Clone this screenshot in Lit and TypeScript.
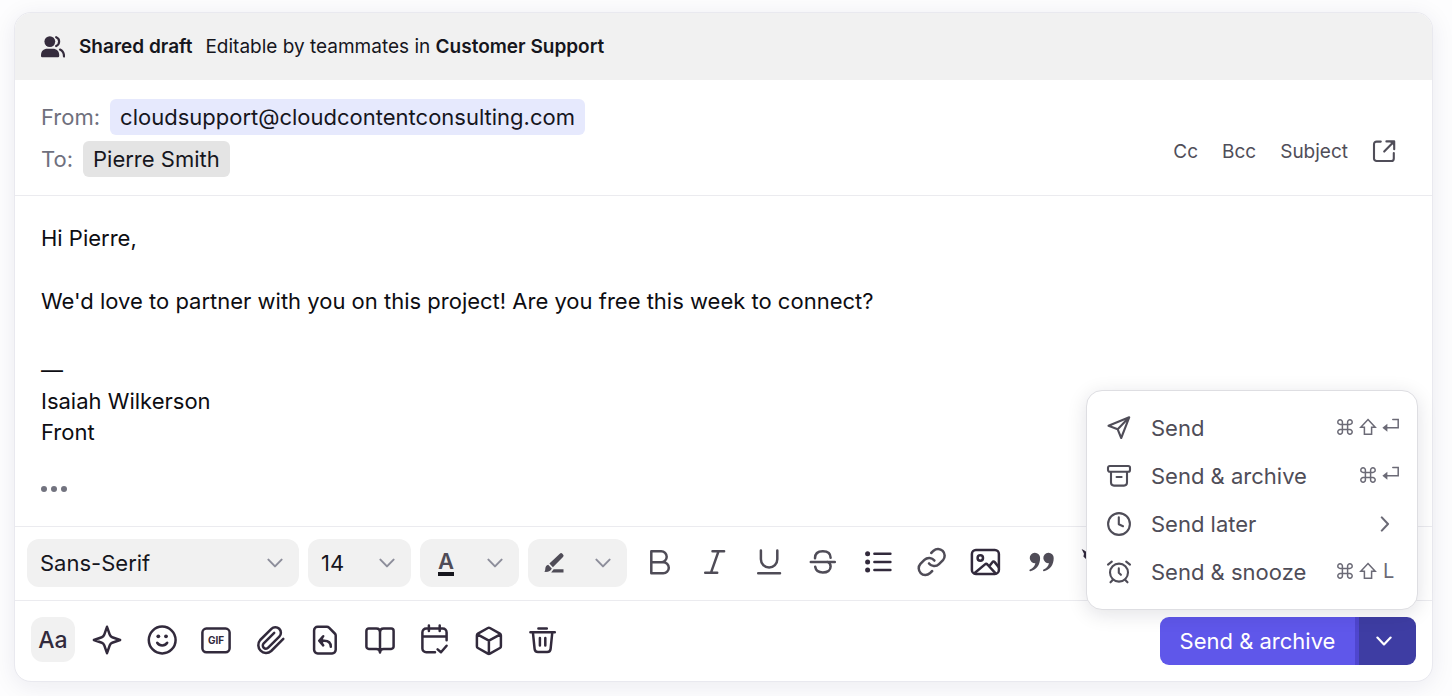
import { LitElement, html, css, svg, nothing, type TemplateResult, type SVGTemplateResult } from "lit";
import { customElement, property } from "lit/decorators.js";

const glyphs: Record<string, { box: number; art: SVGTemplateResult }> = {
  people: {
    box: 24,
    art: svg`<g class="solid"><circle cx="8.8" cy="6.6" r="5.4"/><path d="M0 20.2c0-4 2.600-6.400 6.400-6.400h5.400c3.800 0 6.400 2.400 6.400 6.400v.9a1.200 1.200 0 0 1-1.200 1.200H1.200A1.200 1.200 0 0 1 0 21.100z"/></g>
      <path d="M15.200 2.200c3.900 1.600 3.900 7.200 0 8.800M19 14.600c2.600 1.200 4 3.400 4 6.800"/>`,
  },
  popout: {
    box: 24,
    art: svg`<path d="M8.800 1.600H4.600a2.600 2.600 0 0 0-2.600 2.600v14.200A2.600 2.600 0 0 0 4.600 21h14.600a2.600 2.600 0 0 0 2.600-2.600V13M14.400 1.400h7.800v7.800M22 1.600 12.200 11.600"/><path class="solid" d="M17.500 1.400h4.700v4.700z"/>`,
  },
  chevron: { box: 16, art: svg`<path d="m1.400 4.600 6.600 6.800 6.600-6.800"/>` },
  next: { box: 16, art: svg`<path d="m4.800 1.400 6.200 6.600-6.200 6.600"/>` },
  marker: {
    box: 24,
    art: svg`<g class="solid"><path d="M7.400 12.600 17.800 2.800a1.800 1.800 0 0 1 2.600 0l.6.6a1.800 1.800 0 0 1 0 2.600L10.900 16.200z"/><path d="M6.200 13.800l3.600 3.600c-1 2.600-3.400 3.800-7.600 3.400.9-.8 1-1.800 1.100-3.100.1-2 1.200-3.500 2.900-3.900z"/><path d="M11.600 18.200h9.900v3.200H9.200z"/></g>`,
  },
  bold: {
    box: 32,
    art: svg`<path d="M8.300 4.200v22h12a5.500 5.500 0 0 0 0-11H8.300M18.200 15.200a5.500 5.500 0 0 0 0-11H8.300"/>`,
  },
  italic: { box: 32, art: svg`<path d="M15.500 4.300h11.600M8.200 25.700h12M21.500 4.300 14 25.700"/>` },
  underline: {
    box: 32,
    art: svg`<path d="M8.900 3.400v8.900a8.200 8.200 0 0 0 16.400 0V3.400M6.200 26.300h21.800"/>`,
  },
  strike: {
    box: 32,
    art: svg`<path d="M4.800 14.900h24M9 11.200c0-4.600 3-7 7.800-7s7.800 2.400 7.800 6.600M9.200 19.800c.6 3.600 3.300 5.700 7.600 5.700 4.800 0 7.800-2.300 7.800-5.900 0-2.400-1.200-4-3.200-4.700"/>`,
  },
  list: {
    box: 32,
    art: svg`<path d="M13.400 6.700h16M13.400 15h16M13.400 23h16"/><g class="solid"><circle cx="6.600" cy="6.700" r="2.500"/><circle cx="6.600" cy="15" r="2.500"/><circle cx="6.600" cy="23" r="2.500"/></g>`,
  },
  link: {
    box: 32,
    art: svg`<path d="M14 16.400a6.660 6.660 0 0 0 10 .7l4-4a6.660 6.660 0 0 0-9.400-9.400l-2.400 2.300M19.400 13.600a6.660 6.660 0 0 0-10-.7l-4 4a6.660 6.660 0 0 0 9.400 9.400l2.400-2.300"/>`,
  },
  image: {
    box: 32,
    art: svg`<rect x="2.900" y="2.900" width="27" height="24" rx="4"/><circle cx="11.300" cy="11" r="2.700"/><path d="M5.400 26.300 16 17.400a1.800 1.800 0 0 1 2.400.1l8.200 8.900M20.600 18.800l2.800-3.600a1.500 1.500 0 0 1 2.300-.1l4 5"/>`,
  },
  quote: {
    box: 32,
    art: svg`<g class="solid"><path d="M10.700 5.700a5.200 5.200 0 0 1 5.400 5.400c0 7-3.700 12-9.700 13.200-1 .2-1.400-1.300-.5-1.700 2.900-1.200 4.900-3.200 5.500-6.300a5.200 5.200 0 1 1-.7-10.600z"/><path d="M24.300 5.700a5.200 5.200 0 0 1 5.400 5.400c0 7-3.700 12-9.700 13.200-1 .2-1.400-1.300-.5-1.700 2.900-1.200 4.900-3.200 5.500-6.300a5.200 5.200 0 1 1-.7-10.600z"/></g>`,
  },
  clear: {
    box: 32,
    art: svg`<path class="solid" d="M3.600 2 6 3.200 10 6v8L5.400 9.600 6 6.800z"/>`,
  },
  sparkle: {
    box: 32,
    art: svg`<path d="m16 2.800 2.800 8c.5 1.300 1.200 2 2.400 2.400l7.900 2.800-7.900 2.800c-1.200.4-1.900 1.100-2.400 2.400l-2.800 8-2.800-8c-.5-1.300-1.200-2-2.400-2.400L2.900 16l7.900-2.800c1.200-.4 1.900-1.100 2.400-2.400z"/>`,
  },
  smile: {
    box: 32,
    art: svg`<circle cx="16.200" cy="16" r="13.400"/><path d="M11.200 18.800c2.400 3.600 7.600 3.600 10 0"/><g class="solid"><circle cx="12.300" cy="12.300" r="1.900"/><circle cx="20" cy="12.300" r="1.900"/></g>`,
  },
  gif: {
    box: 32,
    art: svg`<rect x="2.400" y="4.600" width="27.200" height="23.600" rx="4"/><text x="16" y="20.300">GIF</text>`,
  },
  clip: {
    box: 32,
    art: svg`<path d="M28.300 14.800 16.200 27a7.800 7.800 0 0 1-11-11L16.400 4.800a5.500 5.500 0 0 1 7.900 7.800L13.200 23.700a3.100 3.100 0 0 1-4.500-4.400L19.200 8.900"/>`,
  },
  template: {
    box: 32,
    art: svg`<path d="M8.700 2.800h9.200a3 3 0 0 1 2.100.9l5.800 5.800a3 3 0 0 1 .9 2.100v14.200a3.600 3.600 0 0 1-3.600 3.600H8.700a3.600 3.600 0 0 1-3.600-3.600V6.400a3.600 3.600 0 0 1 3.600-3.600z"/><path d="m14.200 12.200-4 4.600 4 4.600M10.600 16.800h4.600c4 0 6.600 2.200 6.600 6"/><path class="solid" d="M14.200 12.200v9.200l-4-4.600z"/>`,
  },
  book: {
    box: 32,
    art: svg`<path d="M16 8c0-2.200-1.300-3.500-3.600-3.500H4.800a2.400 2.400 0 0 0-2.400 2.400v15.600a2.400 2.400 0 0 0 2.400 2.400h7.600c2.200 0 3.600 1.300 3.600 3.500 0-2.200 1.400-3.500 3.600-3.500h7.600a2.400 2.400 0 0 0 2.400-2.400V6.900a2.400 2.400 0 0 0-2.400-2.400h-7.600C17.300 4.500 16 5.800 16 8zv20"/>`,
  },
  calendar: {
    box: 32,
    art: svg`<path d="M17 28.300H8.200a3.800 3.800 0 0 1-3.800-3.800V8.400a3.800 3.800 0 0 1 3.800-3.800h16.600a3.800 3.800 0 0 1 3.800 3.800v7.800M4.400 12.500h24.200M10.900 1.600v5.400M21.700 1.600v5.400M19.600 25.400l3.400 2.900 5.600-6.500"/>`,
  },
  cube: {
    box: 32,
    art: svg`<path d="M14.900 4a2 2 0 0 1 2 0l10 5.600a2 2 0 0 1 1 1.800v10.800a2 2 0 0 1-1 1.800l-10 5.600a2 2 0 0 1-2 0L4.900 24a2 2 0 0 1-1-1.800V11.400a2 2 0 0 1 1-1.800zM4.400 10.400l11.500 6.200 11.500-6.200M15.900 16.600v12.800"/>`,
  },
  trash: {
    box: 32,
    art: svg`<path d="M3.400 8.300h24.400M11.400 4.400h8.400M5.900 8.300l1.700 16.600a3.400 3.400 0 0 0 3.400 3.100h9.200a3.400 3.400 0 0 0 3.400-3.100l1.700-16.600M12.900 14v7.400M18.300 14v7.400"/>`,
  },
  plane: {
    box: 28,
    art: svg`<path d="M3.500 11.800 24.200 3.300 16.200 24 12.700 15.300zM12.700 15.300 24.200 3.300"/>`,
  },
  archive: {
    box: 28,
    art: svg`<rect x="3" y="4" width="22" height="5.800" rx="1.800"/><path d="M6 10v10.600a3 3 0 0 0 3 3h10a3 3 0 0 0 3-3V10M11.600 15h5"/>`,
  },
  clock: { box: 28, art: svg`<circle cx="14" cy="14" r="10.900"/><path d="M13.800 7.200v7.100l4.200 1.900"/>` },
  alarm: {
    box: 28,
    art: svg`<circle cx="14" cy="14.600" r="9"/><path d="M13.800 10.400v4.400l2.100 2M3 6.600l3.800-3M25 6.600l-3.800-3M8 21.700l-2.500 2.600M20 21.700l2.500 2.600"/>`,
  },
  command: {
    box: 18,
    art: svg`<path d="M6.400 6.400h5.200v5.200H6.400zM6.400 6.400H4.200a2.300 2.300 0 1 1 2.200-2.300zM11.600 6.400V4.100a2.300 2.300 0 1 1 2.200 2.300zM11.600 11.600h2.200a2.300 2.300 0 1 1-2.200 2.300zM6.400 11.600v2.300a2.300 2.300 0 1 1-2.200-2.300z"/>`,
  },
  shift: { box: 18, art: svg`<path d="m9 1.500 7.200 7.700h-3.600v7H5.400v-7H1.800z"/>` },
  enter: {
    box: 18,
    art: svg`<path d="M10.800 1.500h5.400v8.300H5"/><path class="solid" d="M.4 9.800l5-4v8z"/>`,
  },
};

const icon = (name: string, extra = ""): TemplateResult => {
  const g = glyphs[name];
  return html`<svg class="icon ${extra}" width=${g.box} height=${g.box} viewBox="0 0 ${g.box} ${g.box}" aria-hidden="true">${g.art}</svg>`;
};

const shared = css`
  :host {
    font-family: Inter, "Liberation Sans", sans-serif;
    color: #16161d;
  }
  * {
    box-sizing: border-box;
  }
  button,
  select {
    font: inherit;
    color: inherit;
    border: 0;
    margin: 0;
    padding: 0;
    background: none;
    cursor: pointer;
  }
  .icon {
    display: block;
    flex: none;
    fill: none;
    stroke: currentColor;
    stroke-width: 2.5;
    stroke-linecap: round;
    stroke-linejoin: round;
  }
  .icon .solid {
    fill: currentColor;
    stroke: none;
  }
  .icon text {
    fill: currentColor;
    stroke: none;
    font-size: 10px;
    font-weight: 700;
    text-anchor: middle;
  }
`;

interface MenuEntry {
  label: string;
  icon: string;
  keys: string[];
  submenu?: boolean;
}

@customElement("send-menu")
export class SendMenu extends LitElement {
  @property({ attribute: false }) entries: MenuEntry[] = [];

  static styles = [
    shared,
    css`
      :host {
        display: block;
        width: 332px;
        padding: 13px 0;
        border: 1px solid #dedee2;
        border-radius: 16px;
        background: #fff;
        box-shadow: 0 4px 20px rgba(20, 20, 40, 0.12);
      }
      .entry {
        display: flex;
        align-items: center;
        width: 100%;
        height: 48px;
        padding: 0 17px 0 18px;
        font-size: 22px;
        color: #4f4d58;
        text-align: left;
      }
      .icon {
        stroke-width: 2.1;
      }
      .label {
        flex: 1;
        padding-left: 18px;
        white-space: nowrap;
      }
      .keys {
        display: flex;
        align-items: center;
        gap: 5px;
        padding-bottom: 2px;
        color: #6b6a76;
      }
      .key {
        stroke-width: 1.5;
        stroke-linejoin: miter;
      }
      .letter {
        width: 18px;
        padding-left: 1px;
        font-size: 20px;
        line-height: 18px;
      }
      .more {
        margin-right: 7px;
        color: #6b6a76;
      }
    `,
  ];

  render() {
    return this.entries.map(
      (e) => html`<button class="entry" role="menuitem">
        ${icon(e.icon)}
        <span class="label">${e.label}</span>
        ${e.submenu ? icon("next", "more") : nothing}
        ${e.keys.length
          ? html`<span class="keys">
              ${e.keys.map((k) => (k in glyphs ? icon(k, "key") : html`<span class="letter">${k}</span>`))}
            </span>`
          : nothing}
      </button>`,
    );
  }
}

@customElement("app-root")
export class AppRoot extends LitElement {
  static styles = [
    shared,
    css`
      :host {
        display: flex;
        min-height: 100vh;
        padding: 12px 19px 14px 14px;
        box-sizing: border-box;
        background: #fdfdfe;
        font-size: 22px;
      }
      .composer {
        flex: 1;
        min-width: 0;
        display: flex;
        flex-direction: column;
        border: 1px solid #e9e9ef;
        border-radius: 17px;
        background: #fff;
        box-shadow: 0 4px 24px rgba(30, 30, 80, 0.08);
      }
      .banner {
        display: flex;
        align-items: center;
        height: 67px;
        padding: 0 26px;
        border-radius: 16px 16px 0 0;
        background: #f1f1f1;
        font-size: 19px;
        white-space: nowrap;
      }
      .banner .icon {
        margin-right: 14px;
        color: #352c3d;
        stroke-width: 2.2;
      }
      .banner strong {
        font-weight: 600;
      }
      .banner .title {
        margin-right: 13px;
      }
      .fields {
        display: flex;
        align-items: center;
        justify-content: space-between;
        padding: 19px 36px 18px 26px;
        border-bottom: 1px solid #ebebef;
      }
      .rows {
        display: grid;
        gap: 6px;
      }
      .row {
        display: flex;
        align-items: center;
        gap: 10px;
        height: 36px;
        color: #6f707d;
      }
      .chip {
        height: 36px;
        padding: 0 10px;
        border-radius: 6px;
        background: #e4e4e4;
        color: #16161d;
      }
      .chip.sender {
        background: #e6e9fd;
      }
      .extras {
        display: flex;
        align-items: center;
        gap: 24px;
        padding-top: 27px;
        font-size: 19px;
        color: #504e59;
      }
      .extras .icon {
        stroke-width: 2.1;
      }
      .editor {
        flex: 1;
        padding: 27px 26px 32px;
        line-height: 31px;
        color: #0d0d12;
        outline: none;
      }
      .editor p {
        margin: 0 0 32px;
      }
      .signature {
        margin: 38px 0;
      }
      .quoted {
        display: flex;
        gap: 4px;
        height: 6px;
      }
      .quoted i {
        width: 6px;
        height: 6px;
        border-radius: 50%;
        background: #72737f;
      }
      .format {
        display: flex;
        align-items: center;
        gap: 9px;
        padding: 12px 12px 13px;
        border-top: 1px solid #ebebef;
      }
      .picker {
        display: grid;
        align-items: center;
        width: 99px;
        height: 48px;
        border-radius: 12px;
        background: #f1f1f1;
      }
      .picker.font {
        width: 272px;
      }
      .picker.size {
        width: 103px;
      }
      .picker select {
        grid-area: 1 / 1;
        width: 100%;
        height: 100%;
        padding: 0 40px 0 13px;
        appearance: none;
      }
      .picker > .icon {
        grid-area: 1 / 1;
        justify-self: end;
        margin-right: 16px;
        pointer-events: none;
      }
      .picker .icon {
        color: #8d8e9b;
        stroke-width: 2;
      }
      .picker.tint {
        display: flex;
        justify-content: space-between;
        padding-left: 14px;
      }
      .picker.tint .marker {
        margin-right: 0;
        color: #4f4c57;
      }
      .letter {
        width: 16px;
        margin-left: 4px;
        border-bottom: 4px solid #16161d;
        font-weight: 600;
        line-height: 22px;
        color: #4f4c57;
      }
      .styles {
        display: flex;
        justify-content: space-between;
        flex: none;
        width: 481px;
      }
      .styles .tool {
        width: 46px;
        color: #4f4c57;
      }
      .styles .tool.dark {
        color: #322a3c;
      }
      .tool {
        display: grid;
        place-items: center;
        width: 44px;
        height: 45px;
        border-radius: 12px;
        color: #322a3c;
      }
      .tool.on {
        background: #f1f1f1;
        font-size: 23px;
        font-weight: 500;
      }
      .actions {
        display: flex;
        align-items: flex-start;
        justify-content: space-between;
        padding: 16px;
        border-top: 1px solid #ebebef;
      }
      .tools {
        display: flex;
        justify-content: space-between;
        width: 534px;
      }
      .send {
        position: relative;
        display: flex;
        height: 48px;
        color: #fff;
      }
      .send .main {
        width: 199px;
        border-right: 4px solid #4f46cf;
        border-radius: 9px 0 0 9px;
        background: #5f57ea;
        white-space: nowrap;
      }
      .send .toggle {
        display: grid;
        place-items: center;
        width: 57px;
        padding-right: 8px;
        border-radius: 0 9px 9px 0;
        background: #3e3da3;
      }
      .send .icon {
        stroke-width: 2.2;
      }
      send-menu {
        position: absolute;
        right: -2px;
        bottom: calc(100% + 7px);
      }
    `,
  ];

  private entries: MenuEntry[] = [
    { label: "Send", icon: "plane", keys: ["command", "shift", "enter"] },
    { label: "Send & archive", icon: "archive", keys: ["command", "enter"] },
    { label: "Send later", icon: "clock", keys: [], submenu: true },
    { label: "Send & snooze", icon: "alarm", keys: ["command", "shift", "L"] },
  ];

  private styleTools: [string, string, boolean][] = [
    ["bold", "Bold", false],
    ["italic", "Italic", false],
    ["underline", "Underline", false],
    ["strike", "Strikethrough", false],
    ["list", "Bulleted list", true],
    ["link", "Insert link", false],
    ["image", "Insert image", true],
    ["quote", "Quote", false],
    ["clear", "Clear formatting", true],
  ];

  private insertTools: [string, string][] = [
    ["sparkle", "Assist"],
    ["smile", "Emoji"],
    ["gif", "GIF"],
    ["clip", "Attach file"],
    ["template", "Message templates"],
    ["book", "Knowledge base"],
    ["calendar", "Calendar"],
    ["cube", "Integrations"],
    ["trash", "Discard draft"],
  ];

  render() {
    return html`
      <main class="composer">
        <header class="banner">
          ${icon("people")}
          <strong class="title">Shared draft</strong>
          <span>Editable by teammates in <strong>Customer Support</strong></span>
        </header>

        <section class="fields">
          <div class="rows">
            <div class="row">
              <span>From:</span><button class="chip sender">cloudsupport@cloudcontentconsulting.com</button>
            </div>
            <div class="row"><span>To:</span><button class="chip">Pierre Smith</button></div>
          </div>
          <div class="extras">
            <button>Cc</button>
            <button>Bcc</button>
            <button>Subject</button>
            <button aria-label="Pop out">${icon("popout")}</button>
          </div>
        </section>

        <section class="editor" role="textbox" aria-multiline="true" aria-label="Message" contenteditable="true" spellcheck="false">
          <p>Hi Pierre,</p>
          <p>We'd love to partner with you on this project! Are you free this week to connect?</p>
          <div class="signature">—<br />Isaiah Wilkerson<br />Front</div>
          <button class="quoted" aria-label="Show trimmed content"><i></i><i></i><i></i></button>
        </section>

        <div class="format" role="toolbar" aria-label="Formatting">
          <label class="picker font">
            <select aria-label="Font"><option>Sans-Serif</option></select>${icon("chevron")}
          </label>
          <label class="picker size">
            <select aria-label="Font size"><option>14</option></select>${icon("chevron")}
          </label>
          <button class="picker tint" aria-label="Text colour"><span class="letter">A</span>${icon("chevron")}</button>
          <button class="picker tint" aria-label="Highlight colour">${icon("marker", "marker")}${icon("chevron")}</button>
          <div class="styles">
            ${this.styleTools.map(
              ([name, label, dark]) => html`<button class="tool ${dark ? "dark" : ""}" aria-label=${label}>${icon(name)}</button>`,
            )}
          </div>
        </div>

        <footer class="actions">
          <div class="tools">
            <button class="tool on" aria-pressed="true">Aa</button>
            ${this.insertTools.map(([name, label]) => html`<button class="tool" aria-label=${label}>${icon(name)}</button>`)}
          </div>
          <div class="send">
            <button class="main">Send &amp; archive</button>
            <button class="toggle" aria-label="More send options" aria-expanded="true">${icon("chevron")}</button>
            <send-menu role="menu" .entries=${this.entries}></send-menu>
          </div>
        </footer>
      </main>
    `;
  }
}
